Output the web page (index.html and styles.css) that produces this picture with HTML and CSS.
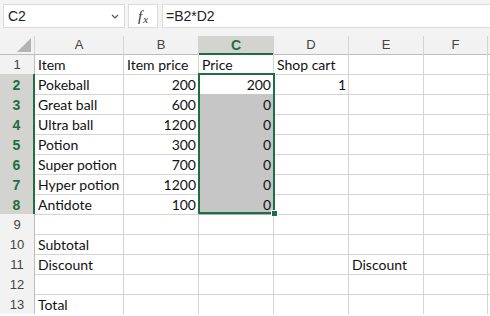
FILE: index.html
```html
<!DOCTYPE html>
<html>
  <head>
    <meta charset="UTF-8" />
    <title>Shop cart</title>
    <link rel="stylesheet" href="styles.css">
  </head>
  <body>
    <div class="toolbar">
      <div class="namebox">
        <span>C2</span>
        <svg class="chev" width="8" height="5" viewBox="0 0 8 5"><path d="M1 1 L4 4 L7 1" fill="none" stroke="#555" stroke-width="1.2"/></svg>
      </div>
      <div class="fxbox"><i>f</i><i class="x">x</i></div>
      <div class="formula">=B2*D2</div>
    </div>

    <div class="sheet">
      <div class="row head">
        <div class="corner"><span class="tri"></span></div>
        <div>A</div><div>B</div><div class="sel">C</div><div>D</div><div>E</div><div>F</div><div class="rest"></div>
      </div>

      <div class="row">
        <div class="num">1</div>
        <div>Item</div><div>Item price</div><div>Price</div><div>Shop cart</div><div></div><div></div><div class="rest"></div>
      </div>
      <div class="row">
        <div class="num on">2</div>
        <div>Pokeball</div><div class="r">200</div><div class="r">200</div><div class="r">1</div><div></div><div></div><div class="rest"></div>
      </div>
      <div class="row">
        <div class="num on">3</div>
        <div>Great ball</div><div class="r">600</div><div class="r hl">0</div><div></div><div></div><div></div><div class="rest"></div>
      </div>
      <div class="row">
        <div class="num on">4</div>
        <div>Ultra ball</div><div class="r">1200</div><div class="r hl">0</div><div></div><div></div><div></div><div class="rest"></div>
      </div>
      <div class="row">
        <div class="num on">5</div>
        <div>Potion</div><div class="r">300</div><div class="r hl">0</div><div></div><div></div><div></div><div class="rest"></div>
      </div>
      <div class="row">
        <div class="num on">6</div>
        <div>Super potion</div><div class="r">700</div><div class="r hl">0</div><div></div><div></div><div></div><div class="rest"></div>
      </div>
      <div class="row">
        <div class="num on">7</div>
        <div>Hyper potion</div><div class="r">1200</div><div class="r hl">0</div><div></div><div></div><div></div><div class="rest"></div>
      </div>
      <div class="row">
        <div class="num on">8</div>
        <div>Antidote</div><div class="r">100</div><div class="r hl">0</div><div></div><div></div><div></div><div class="rest"></div>
      </div>
      <div class="row">
        <div class="num">9</div>
        <div></div><div></div><div></div><div></div><div></div><div></div><div class="rest"></div>
      </div>
      <div class="row">
        <div class="num">10</div>
        <div>Subtotal</div><div></div><div></div><div></div><div></div><div></div><div class="rest"></div>
      </div>
      <div class="row">
        <div class="num">11</div>
        <div>Discount</div><div></div><div></div><div></div><div>Discount</div><div></div><div class="rest"></div>
      </div>
      <div class="row">
        <div class="num">12</div>
        <div></div><div></div><div></div><div></div><div></div><div></div><div class="rest"></div>
      </div>
      <div class="row">
        <div class="num">13</div>
        <div>Total</div><div></div><div></div><div></div><div></div><div></div><div class="rest"></div>
      </div>

      <div class="selection"><span class="handle"></span></div>
    </div>
  </body>
</html>
```

FILE: styles.css
```css
body {
  margin: 0;
  background: #ffffff;
  font-family: "Lato", "Liberation Sans", sans-serif;
  overflow: hidden;
}

.toolbar {
  height: 36px;
  box-sizing: border-box;
  background: #f3f3f3;
  display: flex;
  align-items: flex-start;
  padding: 4px 0 0 3px;
  font-family: "Liberation Sans", sans-serif;
  font-size: 14px;
  color: #222;
}

.namebox,
.fxbox,
.formula {
  height: 24px;
  box-sizing: border-box;
  background: #fff;
  border: 1px solid #dcdcdc;
  display: flex;
  align-items: center;
}

.namebox {
  width: 122px;
  padding: 0 5px 0 4px;
  justify-content: space-between;
}

.chev {
  margin-top: 1px;
}

.fxbox {
  width: 30px;
  margin-left: 3px;
  justify-content: center;
  font-family: "Liberation Serif", serif;
  font-size: 15px;
  color: #333;
}

.fxbox .x {
  font-size: 11px;
  margin-top: 5px;
  margin-left: 1px;
}

.formula {
  flex: 1;
  margin-left: 4px;
  padding-left: 3px;
  border-right: none;
}

.sheet {
  position: relative;
}

.row {
  display: grid;
  grid-template-columns: 35px 89px 75px 75px 75px 75px 64px 1fr;
  height: 20px;
}

.row > div {
  box-sizing: border-box;
  border-right: 1px solid #d4d4d4;
  border-bottom: 1px solid #d4d4d4;
  font-size: 14px;
  line-height: 18px;
  padding: 2px 3px 0 3px;
  color: #111;
  white-space: nowrap;
}

.row > .r {
  text-align: right;
  padding-right: 2px;
}

.row > .hl {
  background: #c6c6c6;
  border-color: #adadad;
}

.row > .rest {
  border-right: none;
}

.head {
  height: 18px;
}

.head > div {
  background: #f2f2f2;
  border-bottom-color: #bcbcbc;
  text-align: center;
  font-family: "Liberation Sans", sans-serif;
  font-size: 13px;
  line-height: 16px;
  padding: 1px 0 0 0;
  color: #444;
}

.head > .sel {
  background: #d3d3cf;
  color: #1f6e43;
  font-weight: bold;
  font-size: 14px;
  border-bottom: 2px solid #1f6e43;
}

.corner {
  position: relative;
}

.tri {
  position: absolute;
  right: 3px;
  bottom: 2px;
  width: 0;
  height: 0;
  border-left: 14px solid transparent;
  border-bottom: 14px solid #b3b3b3;
}

.row > .num {
  background: #f2f2f2;
  border-right-color: #bcbcbc;
  text-align: center;
  font-family: "Liberation Sans", sans-serif;
  font-size: 13px;
  color: #444;
  padding: 2px 0 0 0;
}

.row > .num.on {
  background: #d3d3cf;
  color: #1f6e43;
  font-weight: bold;
  font-size: 14px;
  border-right: 2px solid #1f6e43;
  border-bottom-color: #bcbcbc;
}

.selection {
  position: absolute;
  left: 198px;
  top: 37px;
  width: 77px;
  height: 141px;
  box-sizing: border-box;
  border: 2px solid #1f6e43;
  pointer-events: none;
}

.handle {
  position: absolute;
  right: -5px;
  bottom: -5px;
  width: 5px;
  height: 5px;
  background: #1f6e43;
  border: 1px solid #fff;
}
```
